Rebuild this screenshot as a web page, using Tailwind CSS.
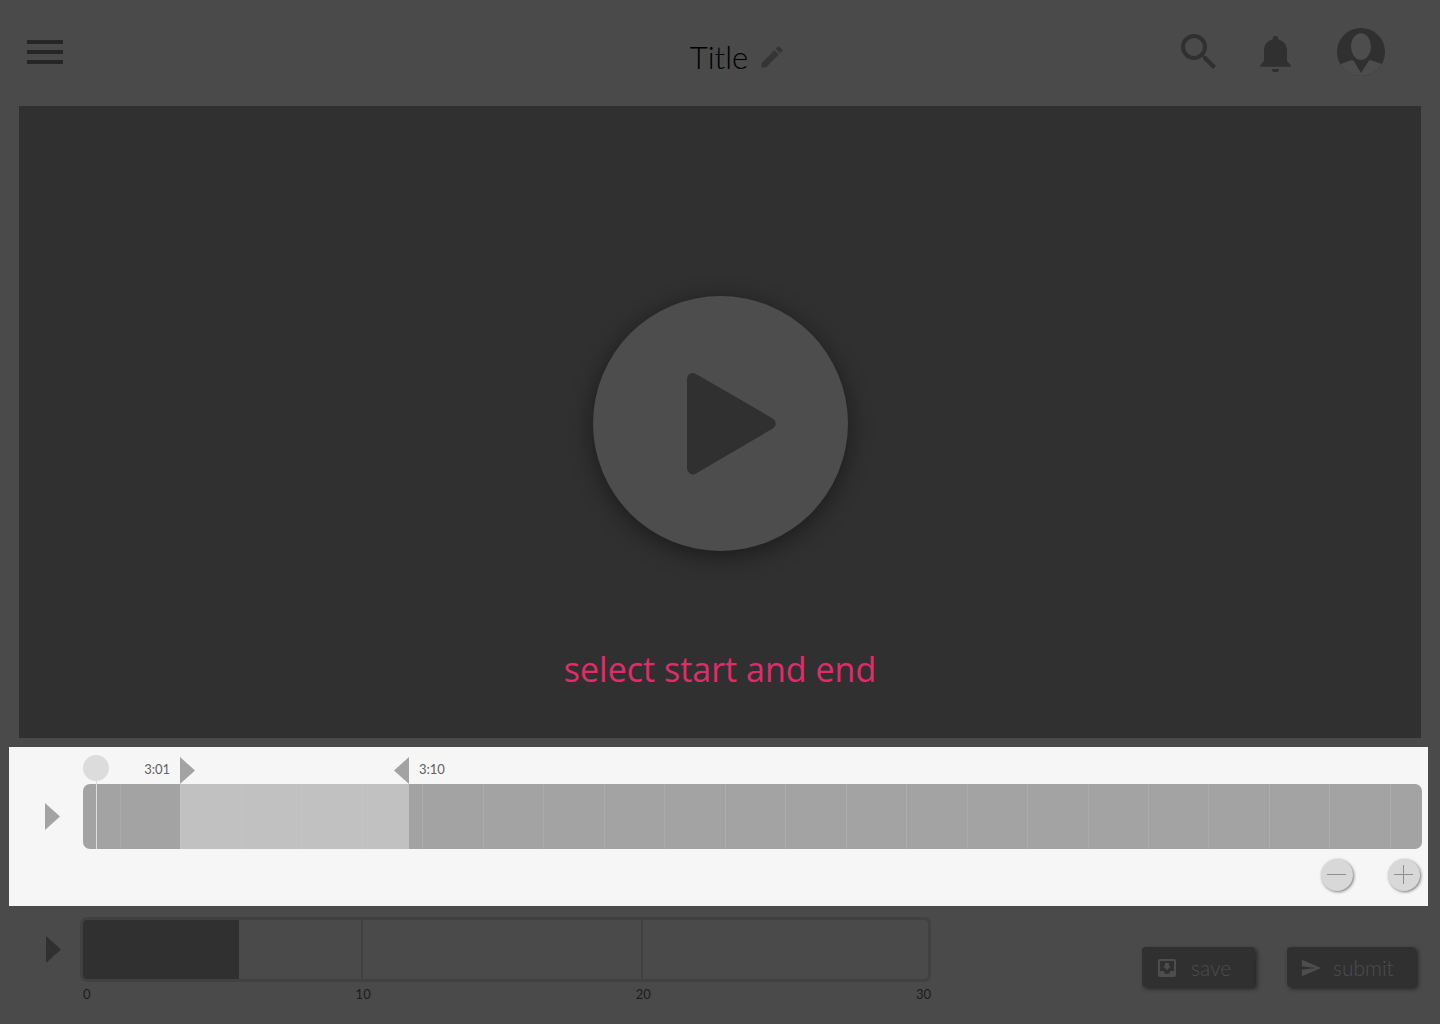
<!DOCTYPE html>
<html lang="en">
<head>
  <meta charset="utf-8" />
  <meta name="viewport" content="width=device-width, initial-scale=1.0" />
  <title>Title</title>
  <script src="https://cdn.jsdelivr.net/npm/@tailwindcss/browser@4"></script>
</head>
<body class="min-h-screen bg-[#4a4a4a] font-['Lato',sans-serif] font-light">
  <!-- top bar -->
  <header class="grid h-[106px] grid-cols-[1fr_auto_1fr] items-center pb-0.5 pl-[27px] pr-[55px]">
    <button type="button" aria-label="Menu" class="w-9">
      <svg viewBox="0 0 36 24" class="h-6 w-9 fill-[#262626]"><path d="M0 0h36v4H0zM0 10h36v4H0zM0 20h36v4H0z" /></svg>
    </button>
    <h1 class="pl-[26px] pt-2.5 text-[31px] leading-10 text-black">Title</h1>
    <div class="flex items-center justify-between">
      <button type="button" aria-label="Edit title" class="ml-2.5 pt-2.5">
        <svg viewBox="0 0 24 24" class="size-7 fill-[#353535]"><path d="M3 17.25V21h3.75L17.81 9.94l-3.75-3.75L3 17.25zM20.71 7.04a1 1 0 0 0 0-1.41l-2.34-2.34a1 1 0 0 0-1.41 0l-1.83 1.83 3.75 3.75 1.83-1.83z" /></svg>
      </button>
      <div class="flex items-center">
        <button type="button" aria-label="Search">
          <svg viewBox="0 0 24 24" class="size-12 fill-[#303030]"><path d="M15.5 14h-.79l-.28-.27A6.47 6.47 0 0 0 16 9.5 6.5 6.5 0 1 0 9.5 16c1.61 0 3.09-.59 4.23-1.57l.27.28v.79l5 4.99L20.49 19l-4.99-5zm-6 0a4.5 4.5 0 1 1 0-9 4.5 4.5 0 0 1 0 9z" /></svg>
        </button>
        <button type="button" aria-label="Notifications" class="ml-[37px] pt-1">
          <svg viewBox="0 0 32 36" class="h-9 w-8 fill-[#303030]"><path d="M15.500 0a2.700 2.700 0 0 0-2.700 3.400C7.500 4.500 4 9 4 14.500V24c0 2.500-4 4-4 6.800h31c0-2.800-4-4.300-4-6.800v-9.500c0-5.500-3.500-10-8.800-11.100A2.700 2.700 0 0 0 15.500 0zM11.900 33h7.200a3.600 3.300 0 0 1-7.200 0z" /></svg>
        </button>
        <button type="button" aria-label="Account" class="ml-[45px]">
          <svg viewBox="0 0 48 48" class="size-12">
            <defs><clipPath id="avatar"><circle cx="24" cy="24" r="24" /></clipPath></defs>
            <g clip-path="url(#avatar)">
              <path d="M0 0h48v48H0z" fill="#303030" />
              <path d="M0 37.500 14 32.300l2.500.2L24 45l8-12.500 2-.2 14 4.700v11H0z" fill="#4d4d4d" />
              <ellipse cx="24" cy="18.500" rx="10" ry="13.300" fill="#4d4d4d" />
            </g>
          </svg>
        </button>
      </div>
    </div>
  </header>

  <main>
    <!-- video -->
    <section class="mx-[19px] flex flex-col items-center bg-[#303030] pb-[45px] pt-[190px]">
      <button type="button" aria-label="Play video" class="size-[255px] rounded-full bg-[#4d4d4d] shadow-[0_5px_24px_rgba(0,0,0,0.45)]">
        <svg viewBox="0 0 255 255" class="size-full fill-[#303030]"><path d="M94 83.500c0-5 5-8 9-5.500l76 44c5 3 5 8 0 11l-76 44.500c-4 2.500-9-.500-9-5.500z" /></svg>
      </button>
      <p class="mt-[94px] font-['Open_Sans',sans-serif] text-[34px] font-normal leading-[48px] text-[#e22b6b]">select start and end</p>
    </section>

    <!-- clip range -->
    <section class="ml-[9px] mr-3 mt-[9px] bg-[#f6f6f6] pb-[15px] pl-9 pr-1.5">
      <div class="flex">
        <button type="button" aria-label="Play selection" class="mt-14 h-[27px] w-[38px] shrink-0">
          <svg viewBox="0 0 15 27" class="h-[27px] w-[15px] fill-[#a3a3a3]"><path d="M0 0l15 13.500L0 27z" /></svg>
        </button>
        <div class="grow">
          <div class="flex h-[37px]">
            <div class="flex w-[97px] justify-between pr-2.5">
              <button type="button" aria-label="Playhead" class="relative mt-2 size-[26px] rounded-full bg-[#dcdcdc]">
                <span class="absolute left-[13px] top-[26px] z-10 h-[68px] w-px bg-[#dcdcdc]"></span>
              </button>
              <span class="pt-3 text-[13px] leading-5 font-normal text-[#606060]">3:01</span>
            </div>
            <div class="flex w-[229px] items-end justify-between">
              <button type="button" aria-label="Start handle"><svg viewBox="0 0 15 27" class="block h-[27px] w-[15px] fill-[#a3a3a3]"><path d="M0 0l15 13.500L0 27z" /></svg></button>
              <button type="button" aria-label="End handle"><svg viewBox="0 0 15 27" class="block h-[27px] w-[15px] fill-[#a3a3a3]"><path d="M15 0L0 13.500 15 27z" /></svg></button>
            </div>
            <span class="pl-2.5 pt-3 text-[13px] leading-5 font-normal text-[#606060]">3:10</span>
          </div>
          <div class="relative flex h-[65px] overflow-hidden rounded-[7px] bg-[#a3a3a3]">
            <span class="w-[38px] border-r border-[#ababab]"></span>
            <span class="flex-1 border-r border-[#ababab]"></span>
            <span class="flex-1 border-r border-[#ababab]"></span>
            <span class="flex-1 border-r border-[#ababab]"></span>
            <span class="flex-1 border-r border-[#ababab]"></span>
            <span class="flex-1 border-r border-[#ababab]"></span>
            <span class="flex-1 border-r border-[#ababab]"></span>
            <span class="flex-1 border-r border-[#ababab]"></span>
            <span class="flex-1 border-r border-[#ababab]"></span>
            <span class="flex-1 border-r border-[#ababab]"></span>
            <span class="flex-1 border-r border-[#ababab]"></span>
            <span class="flex-1 border-r border-[#ababab]"></span>
            <span class="flex-1 border-r border-[#ababab]"></span>
            <span class="flex-1 border-r border-[#ababab]"></span>
            <span class="flex-1 border-r border-[#ababab]"></span>
            <span class="flex-1 border-r border-[#ababab]"></span>
            <span class="flex-1 border-r border-[#ababab]"></span>
            <span class="flex-1 border-r border-[#ababab]"></span>
            <span class="flex-1 border-r border-[#ababab]"></span>
            <span class="flex-1 border-r border-[#ababab]"></span>
            <span class="flex-1 border-r border-[#ababab]"></span>
            <span class="flex-1 border-r border-[#ababab]"></span>
            <span class="w-[31px]"></span>
            <div class="absolute inset-y-0 left-[97px] w-[229px] bg-[#dcdcdc]/53"></div>
          </div>
        </div>
      </div>
      <div class="mt-2.5 flex justify-end gap-[35px] pr-0.5">
        <button type="button" aria-label="Zoom out" class="size-8 rounded-full bg-[#d8d8d8] shadow-[1px_1px_3px_rgba(0,0,0,0.5)]">
          <svg viewBox="0 0 32 32" class="size-full stroke-[#8f8f8f]"><path d="M6 15.500h19" /></svg>
        </button>
        <button type="button" aria-label="Zoom in" class="size-8 rounded-full bg-[#d8d8d8] shadow-[1px_1px_3px_rgba(0,0,0,0.5)]">
          <svg viewBox="0 0 32 32" class="size-full stroke-[#8f8f8f]"><path d="M6 15.500h19M15.500 6v19" /></svg>
        </button>
      </div>
    </section>
  </main>

  <!-- full length bar and actions -->
  <footer class="flex items-start justify-between pb-5 pl-[46px] pr-6 pt-[11px]">
    <div class="flex">
      <button type="button" aria-label="Play recording" class="mt-[19px] h-[27px] w-[34px] shrink-0">
        <svg viewBox="0 0 15 27" class="h-[27px] w-[15px] fill-[#303030]"><path d="M0 0l15 13.500L0 27z" /></svg>
      </button>
      <div class="w-[851px]">
        <div class="flex h-[65px] rounded-[7px] border-[3px] border-[#414141]">
          <div class="w-[280px] border-r-2 border-[#414141]"><div class="h-full w-[156px] rounded-l bg-[#303030]"></div></div>
          <div class="w-[280px] border-r-2 border-[#414141]"></div>
        </div>
        <div class="flex justify-between pl-[3px] pt-0.5 text-[13px] leading-5 font-normal text-[#1c1c1c]">
          <span>0</span>
          <span>10</span>
          <span>20</span>
          <span>30</span>
        </div>
      </div>
    </div>
    <div class="flex gap-8 pt-[30px] text-[21px] text-[#4d4d4d]">
      <button type="button" class="flex h-10 w-[113px] items-center gap-3 rounded bg-[#303030] pl-[13px] pt-0.5 shadow-[2px_2px_4px_rgba(0,0,0,0.5)]">
        <svg viewBox="0 0 24 24" class="size-6 fill-[#4d4d4d]"><path d="M19 3H5a2 2 0 0 0-2 2v14a2 2 0 0 0 2 2h14a2 2 0 0 0 2-2V5a2 2 0 0 0-2-2zm0 12h-4a3 3 0 0 1-6 0H5V5h14v10zm-3-5h-2V7h-4v3H8l4 4 4-4z" /></svg>
        save
      </button>
      <button type="button" class="flex h-10 w-[129px] items-center gap-[11px] rounded bg-[#303030] pl-[13px] pt-0.5 shadow-[2px_2px_4px_rgba(0,0,0,0.5)]">
        <svg viewBox="0 0 24 24" class="size-[22px] fill-[#4d4d4d]"><path d="M2 21l21-9L2 3v7l15 2-15 2v7z" /></svg>
        submit
      </button>
    </div>
  </footer>
</body>
</html>
